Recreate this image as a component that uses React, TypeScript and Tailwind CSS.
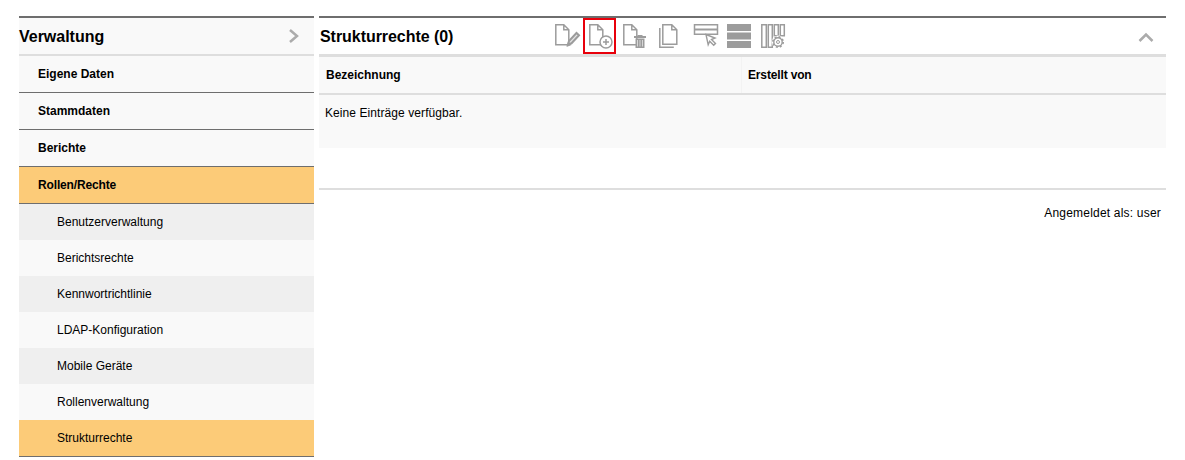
import React from "react";

const topItems = ["Eigene Daten", "Stammdaten", "Berichte"];

const subItems = [
  "Benutzerverwaltung",
  "Berichtsrechte",
  "Kennwortrichtlinie",
  "LDAP-Konfiguration",
  "Mobile Geräte",
  "Rollenverwaltung",
];

const GREY = "#9c9c9c";

const Doc = ({ x }: { x: number }) => (
  <path
    transform={`translate(${x} 0)`}
    d="M0.800 1.800h8l5 5v15h-13z M8.800 1.800v5h5"
    fill="none"
    stroke={GREY}
    strokeWidth="1.500"
  />
);

const EditIcon = () => (
  <svg width="26" height="26" viewBox="0 0 26 26">
    <Doc x={0} />
    <path d="M13 21.500l1-3.500 7.500-8 2.500 2.300-7.500 8z" fill="#e4e4e4" stroke={GREY} strokeWidth="2" />
    <path d="M11.500 24l1.500-5 3.500 3z" fill={GREY} />
  </svg>
);

const AddIcon = () => (
  <svg width="26" height="26" viewBox="0 0 26 26">
    <Doc x={2} />
    <circle cx="19" cy="19" r="6" fill="#fff" stroke={GREY} strokeWidth="1.500" />
    <path d="M16 19h6M19 16v6" stroke={GREY} strokeWidth="1.500" />
  </svg>
);

const DeleteIcon = () => (
  <svg width="26" height="26" viewBox="0 0 26 26">
    <Doc x={3} />
    <path d="M14 13h12v2H14z M17.500 12h5v2h-5z" fill={GREY} />
    <path d="M15.500 15.500h9v9.500h-9z" fill={GREY} />
    <path d="M17.500 17v6.500M20 17v6.500M22.500 17v6.500" stroke="#e6e6e6" strokeWidth="0.800" />
  </svg>
);

const CopyIcon = () => (
  <svg width="26" height="26" viewBox="0 0 26 26">
    <path d="M3.800 5v19.200h14" fill="none" stroke={GREY} strokeWidth="1.500" />
    <path d="M6.800 1.800h9l5 5v14.500h-14z M15.800 1.800v5h5" fill="none" stroke={GREY} strokeWidth="1.500" />
  </svg>
);

const RowSelectIcon = () => (
  <svg width="26" height="26" viewBox="0 0 26 26">
    <path d="M1.500 1.800h23v9.500h-23z" fill="none" stroke={GREY} strokeWidth="1.500" />
    <path d="M1 5.500h24v2H1z" fill={GREY} />
    <path d="M13 11.500l9 3.500-3.500 1.500 4 4-1.800 1.800-4-4-1.500 3.500z" fill="#fff" stroke={GREY} strokeWidth="1.400" />
  </svg>
);

const RowsIcon = () => (
  <svg width="26" height="26" viewBox="0 0 26 26">
    <path d="M1 1h24v7H1z M1 9.500h24v7H1z M1 18h24v7H1z" fill={GREY} />
  </svg>
);

const ColumnsIcon = () => (
  <svg width="26" height="26" viewBox="0 0 26 26">
    <path
      d="M1.800 1.800h4.500v22.500H1.800z M8.300 1.800h4v22.500h-4z M14.300 1.800h4v11h-4z M20.300 1.800h4v11h-4z"
      fill="none"
      stroke={GREY}
      strokeWidth="1.500"
    />
    <circle cx="18" cy="19" r="6.500" fill="#fff" />
    <circle cx="18" cy="19" r="4.200" fill="none" stroke={GREY} strokeWidth="1.400" />
    <circle cx="18" cy="19" r="5.200" fill="none" stroke={GREY} strokeWidth="1.600" strokeDasharray="2 2.080" />
    <circle cx="18" cy="19" r="1.500" fill="none" stroke={GREY} strokeWidth="1" />
  </svg>
);

const App = () => {
  return (
    <div className="flex gap-[5px] px-[19px] pt-[16px] bg-white h-[460px] text-[12px] text-black font-['Liberation_Sans',Arial,sans-serif]">
      <div className="w-[295px] shrink-0">
        <div className="h-[40px] flex items-center justify-between bg-[#f9f9f9] border-t-2 border-b-2 border-t-[#6e6e6e] border-b-[#dedede] pr-[14px]">
          <h2 className="text-[16px] font-bold tracking-[-0.02px] mt-[2px]">Verwaltung</h2>
          <svg width="12" height="16" viewBox="0 0 12 16">
            <path d="M2 2l7 6-7 6" fill="none" stroke="#ababab" strokeWidth="2.500" />
          </svg>
        </div>
        <ul className="font-bold">
          {topItems.map((item) => (
            <li key={item} className="h-[37px] flex items-center pl-[19px] bg-[#f9f9f9] border-b border-[#6e6e6e]">
              {item}
            </li>
          ))}
          <li className="h-[37px] flex items-center pl-[19px] bg-[#fccb78] border-b border-[#6e6e6e] tracking-[-0.15px]">
            Rollen/Rechte
          </li>
        </ul>
        <ul>
          {subItems.map((item, i) => (
            <li
              key={item}
              className={`h-[36px] flex items-center pl-[38px] ${i % 2 === 0 ? "bg-[#efefef]" : "bg-[#f9f9f9]"}`}
            >
              {item}
            </li>
          ))}
          <li className="h-[37px] flex items-center pl-[38px] bg-[#fccb78] border-b border-[#6e6e6e]">
            Strukturrechte
          </li>
        </ul>
      </div>

      <div className="flex-1">
        <div className="h-[41px] flex items-center bg-white border-t-2 border-b-[3px] border-t-[#6e6e6e] border-b-[#dedede] pl-[1px] pr-[13px]">
          <h2 className="text-[16px] font-bold w-[233px] shrink-0 mt-[2px] tracking-[-0.05px]">Strukturrechte (0)</h2>
          <div className="flex items-center">
            <span className="w-[30px] h-[36px] flex items-center justify-center"><EditIcon /></span>
            <span className="w-[33px] h-[36px] flex items-center justify-center border-2 border-[#e8000b]"><AddIcon /></span>
            <span className="w-[34px] h-[36px] flex items-center justify-center"><DeleteIcon /></span>
            <span className="w-[38px] h-[36px] flex items-center justify-center"><CopyIcon /></span>
            <span className="w-[35px] h-[36px] flex items-center justify-center"><RowSelectIcon /></span>
            <span className="w-[32px] h-[36px] flex items-center justify-center"><RowsIcon /></span>
            <span className="w-[36px] h-[36px] flex items-center justify-center"><ColumnsIcon /></span>
          </div>
          <svg className="ml-auto mt-[1px] -mr-[1px]" width="16" height="10" viewBox="0 0 16 10">
            <path d="M1.500 9l6.500-6.500L14.500 9" fill="none" stroke="#ababab" strokeWidth="2.500" />
          </svg>
        </div>
        <div className="h-[38px] flex items-center bg-[#f9f9f9] border-b-2 border-[#dedede] font-bold">
          <span className="w-[423px] pl-[7px] h-full flex items-center border-r border-[#f3f3f3]">Bezeichnung</span>
          <span className="pl-[5px] tracking-[-0.15px] ml-[1px]">Erstellt von</span>
        </div>
        <div className="h-[53px] bg-[#f9f9f9] pt-[9px] pl-[6px] tracking-[0.08px]">Keine Einträge verfügbar.</div>
        <div className="h-[2px] mt-[40px] bg-[#dedede]" />
        <div className="text-right pr-[5px] mt-[14px] tracking-[0.2px]">Angemeldet als: user</div>
      </div>
    </div>
  );
};

export default App;
